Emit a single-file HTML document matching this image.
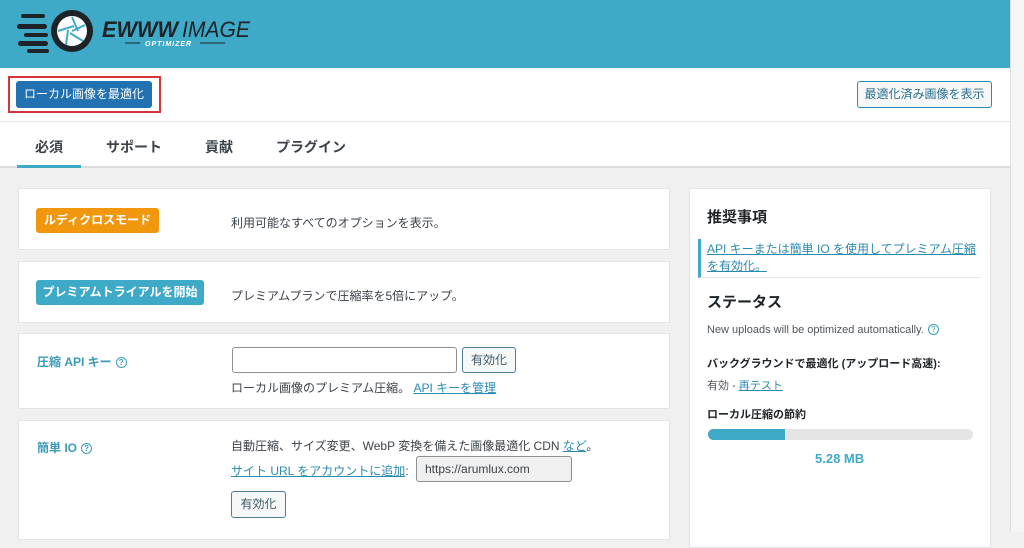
<!DOCTYPE html>
<html><head><meta charset="utf-8"><style>
*{box-sizing:border-box;margin:0;padding:0}
body{width:1024px;height:532px;overflow:hidden;background:#f0f0f1;font-family:"Liberation Sans","Noto Sans CJK JP",sans-serif;font-size:12px;color:#3c434a;position:relative}
.hdr{position:absolute;left:0;top:0;width:1010px;height:68px;background:#3fa9c8}
.sb{position:absolute;left:1010px;top:0;width:14px;height:532px;background:#f5f5f5;border-left:1px solid #ddd}
.bar{position:absolute;left:0;top:68px;width:1010px;height:53px;background:#fff}
.tabs{position:absolute;left:0;top:121px;width:1010px;height:47px;background:#fff;border-top:1px solid #e5e5e5;border-bottom:2px solid #dcdcde}
.tab{position:absolute;top:15px;font-size:14px;font-weight:bold;color:#3c434a}
.card{position:absolute;background:#fff;border:1px solid #e2e4e7}
.btn{position:absolute;font-size:12px;border-radius:3px}
a,.lk{color:#2a8bb0;text-decoration:underline}
.lab{position:absolute;left:18px;color:#3a9ab8;font-weight:bold;font-size:12px}
.q{display:inline-block;width:11px;height:11px;border:1px solid #3a9ab8;border-radius:50%;font-size:8px;line-height:9px;text-align:center;color:#3a9ab8;margin-left:4px;vertical-align:1px}
.t{position:absolute;font-size:12px;color:#3c434a;white-space:nowrap}
.sbtn{position:absolute;border:1px solid #4f7d95;border-radius:3px;background:#f6f7f7;color:#3c5a6a;font-size:12px;text-align:center}
</style></head><body>
<div class="hdr">
<svg width="260" height="68" style="position:absolute;left:0;top:0">
<g fill="#1d2327"><rect x="21" y="14" width="24" height="4" rx="2"/><rect x="17" y="24" width="30" height="5" rx="2.5"/><rect x="24" y="33" width="24" height="4" rx="2"/><rect x="18" y="41" width="30" height="5" rx="2.5"/><rect x="27" y="49" width="22" height="4" rx="2"/></g>
<circle cx="72" cy="31" r="21" fill="#1d2327"/><circle cx="72" cy="31" r="15" fill="#fff"/>
<g stroke="#3fa9c8" stroke-width="2"><line x1="72" y1="17" x2="78" y2="31"/><line x1="85" y1="25" x2="72" y2="31"/><line x1="83" y1="41" x2="70" y2="33"/><line x1="66" y1="45" x2="68" y2="30"/><line x1="58" y1="31" x2="74" y2="26"/></g>
<text x="102" y="37" font-family="Liberation Sans" font-style="italic" font-weight="bold" font-size="22" fill="#1d2327" textLength="76" lengthAdjust="spacingAndGlyphs">EWWW</text>
<text x="182" y="37" font-family="Liberation Sans" font-style="italic" font-size="22" fill="#1d2327" textLength="68" lengthAdjust="spacingAndGlyphs">IMAGE</text>
<text x="145" y="46" font-family="Liberation Sans" font-style="italic" font-weight="bold" font-size="7" fill="#fff" letter-spacing="1">OPTIMIZER</text>
<line x1="125" y1="43" x2="140" y2="43" stroke="#1d2327"/><line x1="200" y1="43" x2="225" y2="43" stroke="#1d2327"/>
</svg></div>
<div class="sb"></div>
<div class="bar">
<div style="position:absolute;left:8px;top:8px;width:153px;height:37px;border:2px solid #d63638"></div>
<div class="btn" style="left:16px;top:13px;width:136px;height:27px;background:#2271b1;color:#fff;line-height:27px;text-align:center">ローカル画像を最適化</div>
<div class="btn" style="left:857px;top:13px;width:135px;height:27px;border:1px solid #2a8bb0;color:#2a6f90;line-height:25px;text-align:center;background:#f6f7f7">最適化済み画像を表示</div>
</div>
<div class="tabs">
<div class="tab" style="left:35px">必須</div>
<div style="position:absolute;left:17px;top:43px;width:64px;height:3px;background:#3fa9c8"></div>
<div class="tab" style="left:106px">サポート</div>
<div class="tab" style="left:205px">貢献</div>
<div class="tab" style="left:276px">プラグイン</div>
</div>
<div class="card" style="left:18px;top:188px;width:652px;height:62px">
<div class="btn" style="left:17px;top:19px;width:123px;height:25px;background:#f0970e;color:#fff;font-weight:bold;line-height:25px;text-align:center">ルディクロスモード</div>
<div class="t" style="left:212px;top:25px">利用可能なすべてのオプションを表示。</div></div>
<div class="card" style="left:18px;top:261px;width:652px;height:62px">
<div class="btn" style="left:17px;top:18px;width:168px;height:25px;background:#3fa9c8;color:#fff;font-weight:bold;line-height:25px;text-align:center">プレミアムトライアルを開始</div>
<div class="t" style="left:212px;top:25px">プレミアムプランで圧縮率を5倍にアップ。</div></div>
<div class="card" style="left:18px;top:333px;width:652px;height:76px">
<div class="lab" style="top:19px">圧縮 API キー<span class="q">?</span></div>
<div style="position:absolute;left:213px;top:13px;width:225px;height:26px;border:1px solid #8c8f94;border-radius:3px"></div>
<div class="sbtn" style="left:443px;top:13px;width:54px;height:26px;line-height:24px">有効化</div>
<div class="t" style="left:212px;top:45px">ローカル画像のプレミアム圧縮。 <span class="lk">API キーを管理</span></div></div>
<div class="card" style="left:18px;top:420px;width:652px;height:120px">
<div class="lab" style="top:18px">簡単 IO<span class="q">?</span></div>
<div class="t" style="left:212px;top:16px">自動圧縮、サイズ変更、WebP 変換を備えた画像最適化 CDN <span class="lk">など</span>。</div>
<div class="t" style="left:212px;top:41px"><span class="lk">サイト URL をアカウントに追加</span>:</div>
<div style="position:absolute;left:397px;top:35px;width:156px;height:26px;border:1px solid #8c8f94;border-radius:3px;background:#f0f0f1;padding:5px 8px;font-size:12px">https://arumlux.com</div>
<div class="sbtn" style="left:212px;top:70px;width:55px;height:27px;line-height:25px">有効化</div></div>
<div class="card" style="left:689px;top:188px;width:302px;height:360px">
<div class="t" style="left:17px;top:17px;font-size:15px;font-weight:bold;color:#1d2327">推奨事項</div>
<div style="position:absolute;left:8px;top:50px;width:282px;height:39px;border-left:3px solid #3fa9c8;border-bottom:1px solid #e5e5e5"></div>
<div class="t" style="left:17px;top:52px;line-height:17px"><span class="lk">API キーまたは簡単 IO を使用してプレミアム圧縮<br>を有効化。</span></div>
<div class="t" style="left:17px;top:102px;font-size:15px;font-weight:bold;color:#1d2327">ステータス</div>
<div class="t" style="left:17px;top:135px;font-size:11px;color:#50575e">New uploads will be optimized automatically.<span class="q">?</span></div>
<div class="t" style="left:17px;top:166px;font-size:11px;font-weight:bold;color:#1d2327">バックグラウンドで最適化 (アップロード高速):</div>
<div class="t" style="left:17px;top:188px;font-size:11px;color:#50575e">有効 - <span class="lk">再テスト</span></div>
<div class="t" style="left:17px;top:217px;font-size:11px;font-weight:bold;color:#1d2327">ローカル圧縮の節約</div>
<div style="position:absolute;left:18px;top:240px;width:265px;height:11px;border-radius:6px;background:#e5e5e5;overflow:hidden"><div style="width:77px;height:11px;background:#3fa9c8"></div></div>
<div class="t" style="left:125px;top:262px;font-size:13px;font-weight:bold;color:#3fa9c8">5.28 MB</div>
</div>
</body></html>
